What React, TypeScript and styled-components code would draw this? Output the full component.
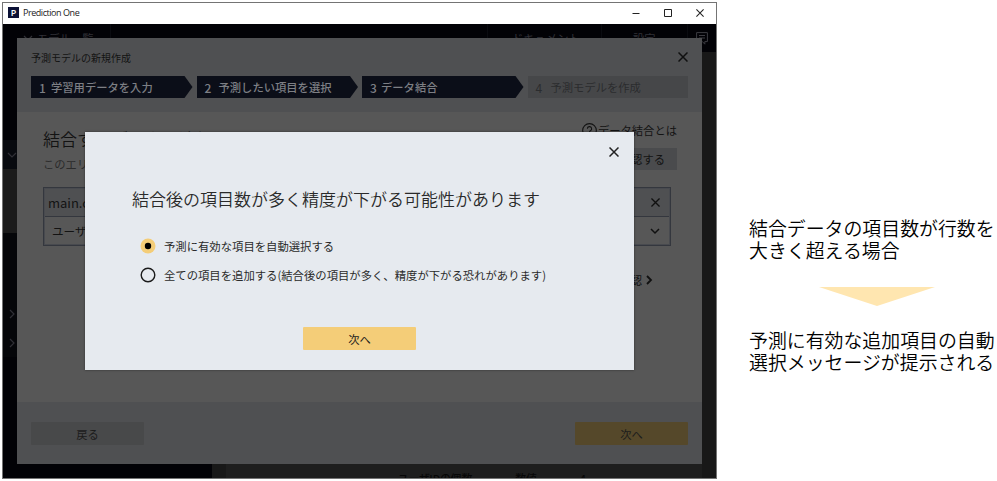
import React from "react";
import styled, { createGlobalStyle } from "styled-components";

const Global = createGlobalStyle`
  * { box-sizing: border-box; }
  body { margin: 0; background: #fff; font-family: "Noto Sans CJK JP", sans-serif; font-weight: 400; overflow: hidden; }
  button { font: inherit; border: 0; padding: 0; }
  h1, h2, p { margin: 0; font-weight: inherit; }
`;

const Page = styled.div`
  display: flex;
  width: 997px;
  height: 481px;
  padding: 2px 0 0 2px;
`;
const AppWindow = styled.section`
  position: relative;
  flex: 0 0 715px;
  height: 477px;
  border: 1px solid #747474;
  display: flex;
  flex-direction: column;
  overflow: hidden;
`;
const TitleBar = styled.header`
  height: 21px;
  flex: none;
  display: flex;
  align-items: center;
  padding: 0 0 2px 5px;
  background: #fff;
`;
const AppMark = styled.span`
  width: 11px;
  height: 11px;
  background: #0c1136;
  color: #fff;
  font: 600 9px/11px "Open Sans", sans-serif;
  text-align: center;
`;
const AppName = styled.span`
  flex: 1;
  margin-left: 4px;
  font: 400 9px/19px "Open Sans", sans-serif;
  letter-spacing: -0.45px;
  color: #222;
`;
const WindowControls = styled.div`
  display: flex;
  gap: 24px;
  padding-right: 12px;
  svg { display: block; }
`;
const Backdrop = styled.div`
  flex: 1;
  display: flex;
  flex-direction: column;
  background: #1b1b1b;
  min-height: 0;
`;
const NavBar = styled.nav`
  height: 28px;
  flex: none;
  display: flex;
  background: #020206;
  color: #303036;
  font-size: 11.3px;
  line-height: 28px;
`;
const NavItem = styled.div<{ $w: number; $pad?: number }>`
  width: ${(p) => p.$w}px;
  padding-left: ${(p) => p.$pad ?? 0}px;
  border-right: 1px solid #0a0b10;
  display: flex;
  align-items: center;
  gap: 4px;
`;
const NavSpace = styled.div`
  flex: 1;
  border-right: 1px solid #0a0b10;
`;
const NavMessage = styled.div`
  width: 28px;
  padding: 8px 0 0 8px;
  svg { display: block; }
`;
const Workspace = styled.div`
  flex: 1;
  display: flex;
`;
const SideRail = styled.aside`
  width: 209px;
  background: #020206;
`;
const RailBlock = styled.div<{ $h: number; $bg: string; $top?: number }>`
  height: ${(p) => p.$h}px;
  background: ${(p) => p.$bg};
  padding: ${(p) => p.$top ?? 0}px 0 0 3.5px;
  svg { display: block; }
`;
const Results = styled.main`
  flex: 1;
  display: flex;
  align-items: flex-end;
  border-left: 14px solid #181818;
  border-right: 14px solid #181818;
  background: #1e1e1e;
`;
const ResultLine = styled.div`
  height: 7px;
  overflow: hidden;
  display: flex;
  gap: 43px;
  padding-left: 172px;
  font-weight: 500;
  font-size: 10.8px;
  font-feature-settings: "palt";
  line-height: 14px;
  color: #070707;
`;

const Wizard = styled.section`
  position: absolute;
  left: 14px;
  top: 35px;
  width: 685px;
  height: 426px;
  display: flex;
  flex-direction: column;
  background: #575757;
  color: #131313;
`;
const WizardHead = styled.header`
  height: 74px;
  padding: 0 14px;
  background: #4f5052;
`;
const WizardTitle = styled.div`
  height: 38px;
  display: flex;
  align-items: center;
  justify-content: space-between;
  font-size: 10px;
`;
const Steps = styled.ol`
  display: grid;
  grid-template-columns: 161.5px 161.5px 161.5px 1fr;
  gap: 4px;
  list-style: none;
  margin: 0;
  padding: 0;
`;
const Step = styled.li<{ $todo?: boolean }>`
  height: 22px;
  padding-left: 8px;
  display: flex;
  background: ${(p) => (p.$todo ? "#464749" : "#0b0e18")};
  color: ${(p) => (p.$todo ? "#2b2c2e" : "#7d7f84")};
  clip-path: ${(p) => (p.$todo ? "none" : "polygon(0 0, calc(100% - 8px) 0, 100% 50%, calc(100% - 8px) 100%, 0 100%)")};
  font-size: 11.3px;
  font-weight: ${(p) => (p.$todo ? 400 : 500)};
  line-height: 23px;
  white-space: nowrap;
`;
const StepNo = styled.span<{ $w: number }>`
  width: ${(p) => p.$w}px;
  font-size: 12px;
`;
const WizardBody = styled.div`
  flex: 1;
  display: flex;
  padding: 7px 25px 0 26px;
`;
const JoinArea = styled.div`
  width: 628px;
  flex: none;
`;
const JoinHead = styled.div`
  display: flex;
  justify-content: space-between;
  width: 634px;
  height: 68px;
`;
const JoinTitle = styled.h1`
  font-size: 17px;
  font-weight: 350;
  line-height: 39px;
  height: 34px;
`;
const JoinNote = styled.p`
  font-size: 11.3px;
  line-height: 22px;
  color: #2b2b2b;
`;
const HelpColumn = styled.div`
  display: flex;
  flex-direction: column;
  align-items: flex-end;
  font-size: 11.3px;
`;
const HelpLink = styled.div`
  display: flex;
  align-items: center;
  gap: 1px;
  height: 22px;
  margin-bottom: 7px;
`;
const ConfirmButton = styled.button`
  width: 114px;
  height: 22px;
  padding-right: 12px;
  text-align: right;
  background: #4a4b4d;
  color: inherit;
`;
const FileTable = styled.div`
  height: 59px;
  border: 1px solid #34373e;
  outline: 1px solid #484a4f;
  outline-offset: -2px;
`;
const FileRow = styled.div<{ $head?: boolean }>`
  height: ${(p) => (p.$head ? 29 : 28)}px;
  padding: 0 10px 0 ${(p) => (p.$head ? 4 : 8)}px;
  background: ${(p) => (p.$head ? "#4f5052" : "transparent")};
  border-bottom: ${(p) => (p.$head ? "1px solid #34373e" : "0")};
  display: flex;
  align-items: center;
  justify-content: space-between;
  font-size: ${(p) => (p.$head ? 13 : 11.6)}px;
`;
const MoreLink = styled.div`
  display: flex;
  align-items: center;
  justify-content: flex-end;
  gap: 2px;
  height: 22px;
  margin-top: 23px;
  padding-right: 17px;
  font-size: 11.3px;
`;
const WizardFoot = styled.footer`
  height: 62px;
  display: flex;
  justify-content: space-between;
  align-items: center;
  padding: 0 14px;
  background: #4f5052;
`;
const ActionButton = styled.button<{ $bg: string }>`
  width: 113px;
  height: 23px;
  border-radius: 1px;
  background: ${(p) => p.$bg};
  color: #1c1c1c;
  font-size: 11.3px;
  line-height: 24px;
`;
const Dialog = styled.section`
  position: absolute;
  left: 82px;
  top: 129px;
  width: 549px;
  height: 238px;
  display: flex;
  flex-direction: column;
  background: #e6eaef;
  box-shadow: 0 0 2px rgba(0, 0, 0, 0.5);
  color: #2a2a2a;
`;
const DialogClose = styled.div`
  height: 47px;
  padding: 15px 15px 0 0;
  display: flex;
  justify-content: flex-end;
`;
const DialogTitle = styled.h2`
  padding-left: 47px;
  height: 53px;
  font-size: 17px;
  font-weight: 350;
  line-height: 40px;
  white-space: nowrap;
`;
const Choice = styled.label`
  height: 28.5px;
  padding-left: 55px;
  display: flex;
  align-items: center;
  gap: 8px;
  font-size: 11.35px;
  white-space: nowrap;
`;
const DialogFoot = styled.div`
  flex: 1;
  padding-top: 38px;
  text-align: center;
  font-size: 0;
`;

const Caption = styled.aside`
  padding: 215px 0 0 32px;
  flex: none;
  font-size: 18.9px;
  font-weight: 350;
  line-height: 22px;
  color: #000;
  white-space: nowrap;
`;
const Arrow = styled.svg`
  display: block;
  margin: 26px 0 23px 70px;
`;

const Cross = ({ s = 10, w = 1.5, c = "#101010" }) => (
  <svg width={s} height={s} viewBox="0 0 10 10" fill="none" stroke={c} strokeWidth={w}>
    <path d="M.5.5l9 9M9.5.5l-9 9" />
  </svg>
);
const Chevron = ({ right = false, c = "#101010", w = 1.5 }) => (
  <svg width="10" height="10" viewBox="0 0 10 10" fill="none" stroke={c} strokeWidth={w}>
    <path d={right ? "M3 1l4 4-4 4" : "M1 3l4 4 4-4"} />
  </svg>
);
const Radio = ({ checked = false }) => (
  <svg width="16" height="16" viewBox="0 0 16 16">
    {checked ? (
      <>
        <circle cx="8" cy="8" r="7.5" fill="#f4cd78" />
        <circle cx="8" cy="8" r="3.2" fill="#000" />
      </>
    ) : (
      <circle cx="8" cy="8" r="6.8" fill="none" stroke="#1b1b1b" strokeWidth="1.4" />
    )}
  </svg>
);

export default function App() {
  return (
    <Page>
      <Global />
      <AppWindow>
        <TitleBar>
          <AppMark>P</AppMark>
          <AppName>Prediction One</AppName>
          <WindowControls>
            <svg width="8" height="8"><path d="M.5 4.5h7" stroke="#222" /></svg>
            <svg width="8" height="8"><path d="M.5.5h7v7h-7z" fill="none" stroke="#222" /></svg>
            <Cross s={8} w={1.3} c="#222" />
          </WindowControls>
        </TitleBar>
        <Backdrop>
          <NavBar>
            <NavItem $w={108} $pad={20}><Chevron c="#303036" w={1.2} />モデル一覧</NavItem>
            <NavSpace />
            <NavItem $w={114} $pad={24}>ドキュメント</NavItem>
            <NavItem $w={86} $pad={31}>設定</NavItem>
            <NavMessage>
              <svg width="12" height="14" viewBox="0 0 12 14" fill="none" stroke="#3c3c42">
                <path d="M.6.6h10.8v9H8.8v2.6L6.4 9.6H.6zM3 3.5h6M3 6h6" />
              </svg>
            </NavMessage>
          </NavBar>
          <Workspace>
            <SideRail>
              <RailBlock $h={88} $bg="#020206" />
              <RailBlock $h={29} $bg="#080a0f" $top={10}><Chevron c="#303036" w={1.2} /></RailBlock>
              <RailBlock $h={64} $bg="#1b1b1b" />
              <RailBlock $h={66} $bg="#050609" />
              <RailBlock $h={29} $bg="#050609" $top={10}><Chevron right c="#303036" w={1.2} /></RailBlock>
              <RailBlock $h={29} $bg="#050609" $top={10}><Chevron right c="#303036" w={1.2} /></RailBlock>
            </SideRail>
            <Results>
              <ResultLine><span>ユーザIDの個数</span><span>数値</span><span>4</span></ResultLine>
            </Results>
          </Workspace>
        </Backdrop>
        <Wizard>
          <WizardHead>
            <WizardTitle>予測モデルの新規作成<Cross /></WizardTitle>
            <Steps>
              <Step><StepNo $w={12}>1</StepNo>学習用データを入力</Step>
              <Step><StepNo $w={14}>2</StepNo>予測したい項目を選択</Step>
              <Step><StepNo $w={11}>3</StepNo>データ結合</Step>
              <Step $todo><StepNo $w={15}>4</StepNo>予測モデルを作成</Step>
            </Steps>
          </WizardHead>
          <WizardBody>
            <JoinArea>
              <JoinHead>
                <div>
                  <JoinTitle>結合するデータを追加してください</JoinTitle>
                  <JoinNote>このエリアに追加</JoinNote>
                </div>
                <HelpColumn>
                  <HelpLink>
                    <svg width="15" height="15" viewBox="0 0 14 14" fill="none" stroke="#131313">
                      <circle cx="7" cy="7" r="6.4" />
                      <path d="M5 5.4a2 2 0 1 1 2.8 1.8q-.8.4-.8 1.4M7 9.6v1.1" />
                    </svg>
                    データ結合とは
                  </HelpLink>
                  <ConfirmButton>結合を確認する</ConfirmButton>
                </HelpColumn>
              </JoinHead>
              <FileTable>
                <FileRow $head>main.csv<Cross s={9} /></FileRow>
                <FileRow>ユーザID<Chevron /></FileRow>
              </FileTable>
              <MoreLink>確認<Chevron right w={1.8} /></MoreLink>
            </JoinArea>
          </WizardBody>
          <WizardFoot>
            <ActionButton $bg="#48494a">戻る</ActionButton>
            <ActionButton $bg="#55482a">次へ</ActionButton>
          </WizardFoot>
        </Wizard>
        <Dialog>
          <DialogClose><Cross c="#222" /></DialogClose>
          <DialogTitle>結合後の項目数が多く精度が下がる可能性があります</DialogTitle>
          <Choice><Radio checked />予測に有効な項目を自動選択する</Choice>
          <Choice><Radio />全ての項目を追加する(結合後の項目が多く、精度が下がる恐れがあります)</Choice>
          <DialogFoot><ActionButton $bg="#f4cd78">次へ</ActionButton></DialogFoot>
        </Dialog>
      </AppWindow>
      <Caption>
        <p>結合データの項目数が行数を<br />大きく超える場合</p>
        <Arrow width="116" height="19"><path d="M0 0h116L58 19z" fill="#ffe6b0" /></Arrow>
        <p>予測に有効な追加項目の自動<br />選択メッセージが提示される</p>
      </Caption>
    </Page>
  );
}
